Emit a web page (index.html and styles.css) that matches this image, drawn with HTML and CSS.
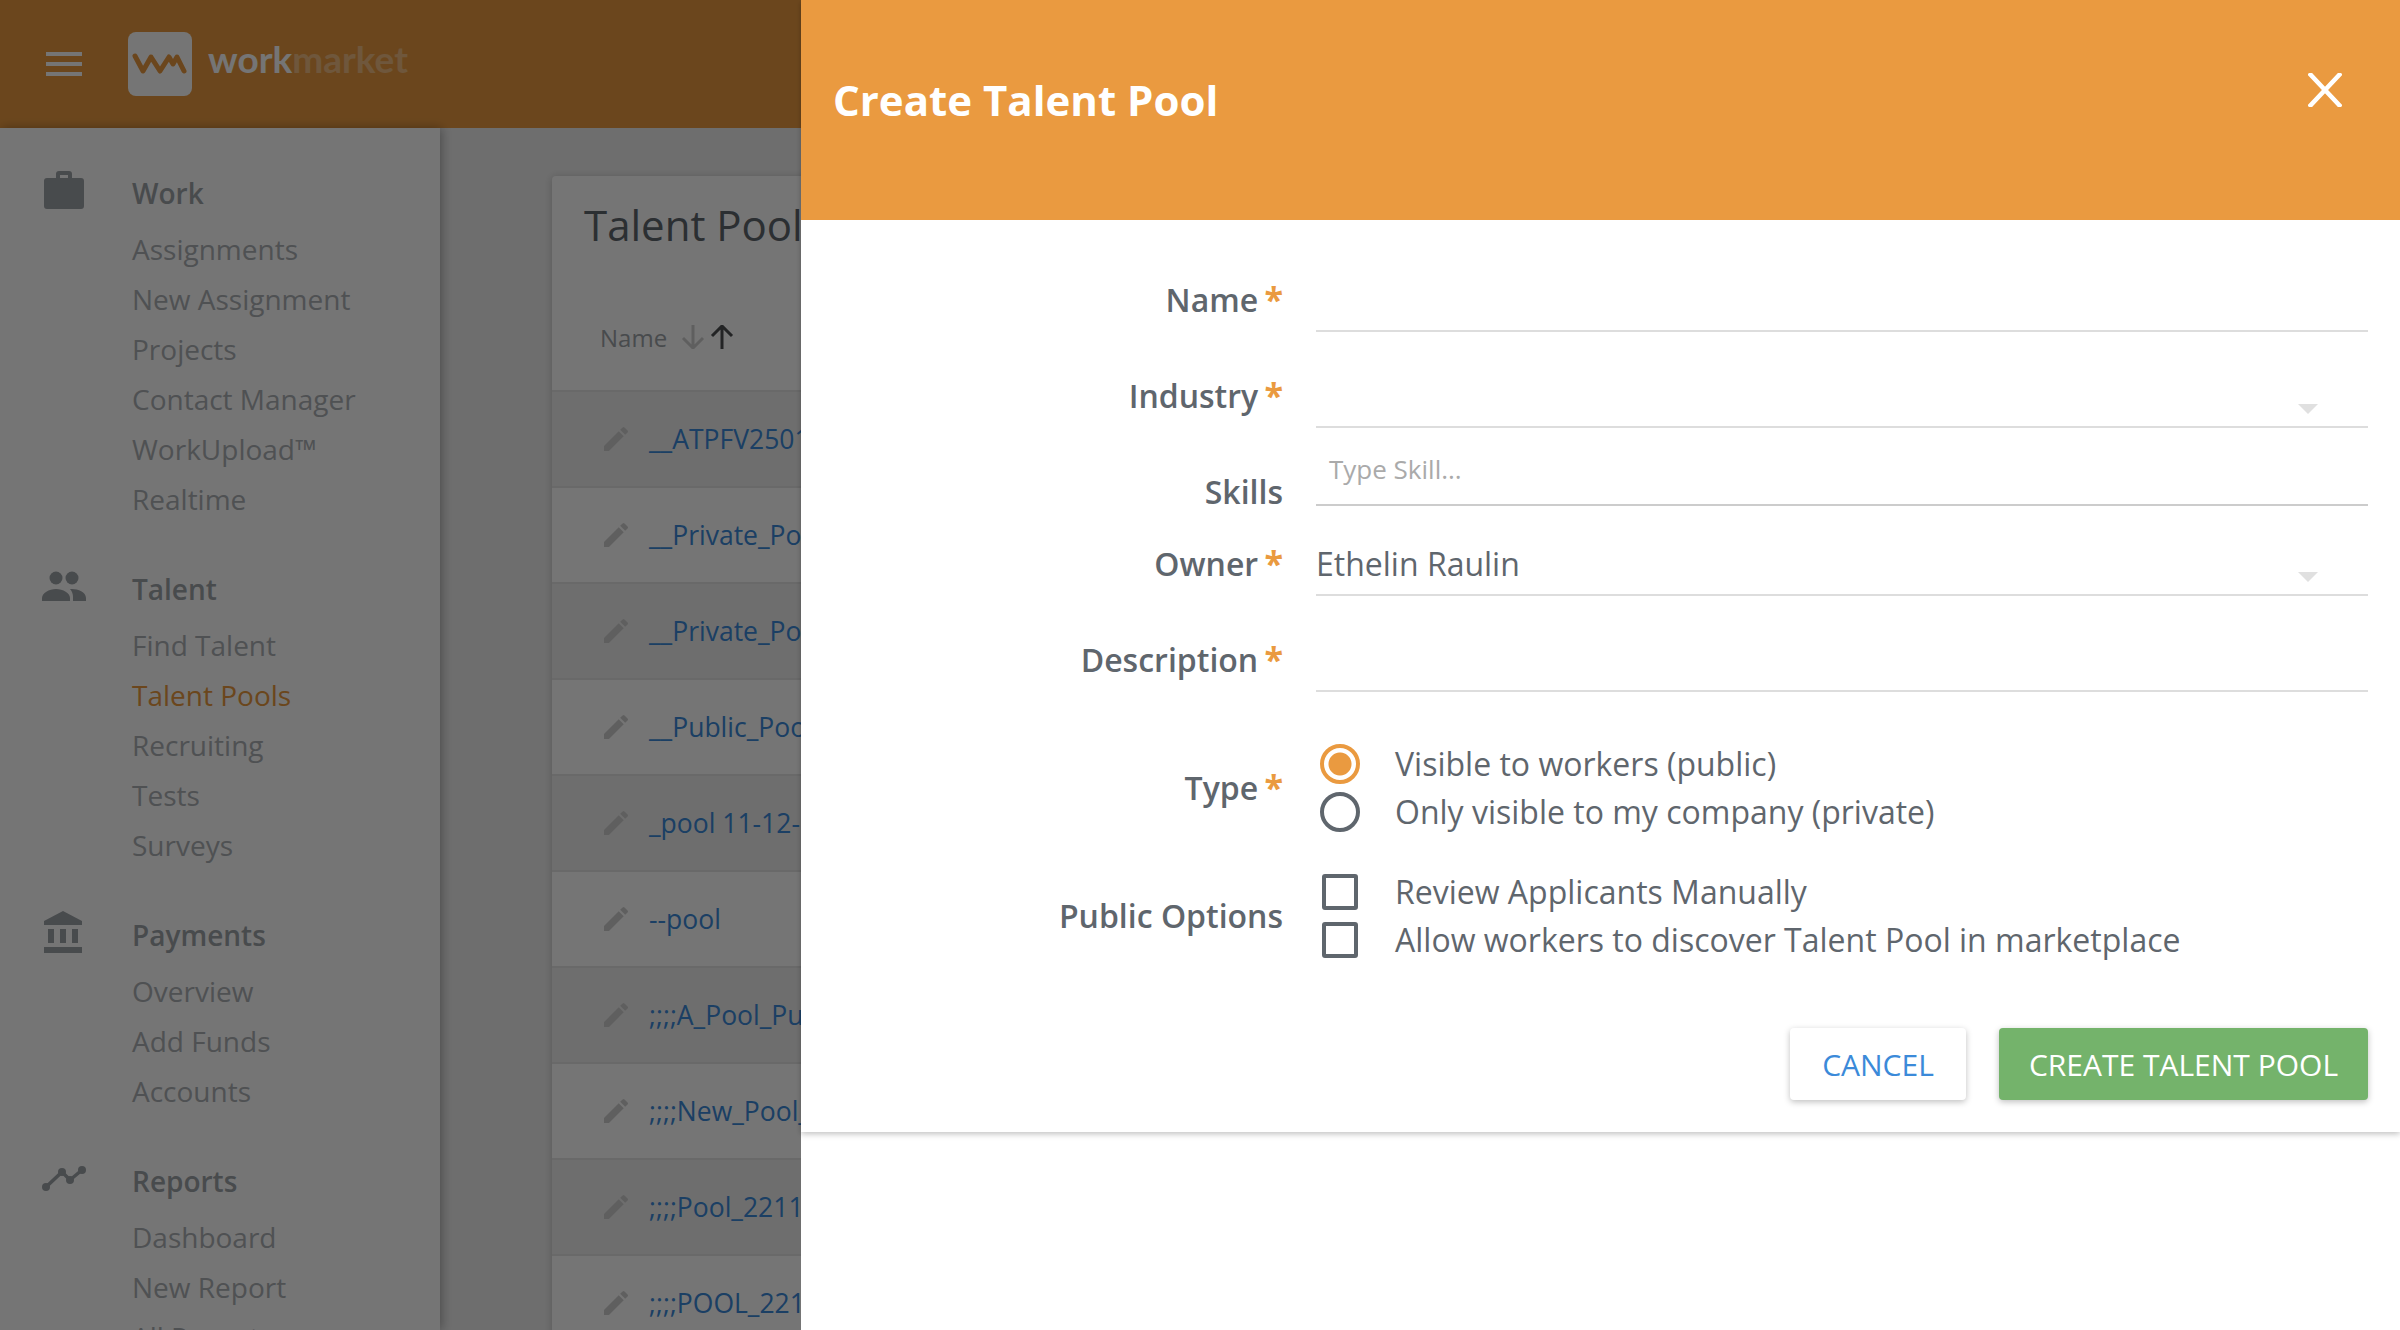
FILE: index.html
```html
<!DOCTYPE html>
<html lang="en">
<head>
    <meta charset="UTF-8">
    <meta name="viewport" content="width=device-width, initial-scale=1.0">
    <title>Create Talent Pool</title>
    <link rel="stylesheet" href="styles.css">
</head>
<body>
    <header class="topbar">
        <div class="hamburger"><span></span><span></span><span></span></div>
        <div class="logo-mark">
            <svg width="64" height="64" viewBox="0 0 64 64"><polyline points="7,24 15,39 23,25 32,39 41,25 45,32 49,25 56,39" fill="none" stroke="#ea9a40" stroke-width="5" stroke-linejoin="round" stroke-linecap="round"/></svg>
        </div>
        <div class="logo-text">work<span>market</span></div>
    </header>

    <div class="app">
        <nav class="sidebar">
            <section class="nav-section">
                <h3 class="nav-heading">
                    <svg class="nav-icon" viewBox="0 0 44 48"><path fill-rule="evenodd" d="M14 11V7a3 3 0 0 1 3-3h10a3 3 0 0 1 3 3v4h9a3 3 0 0 1 3 3v25a3 3 0 0 1-3 3H5a3 3 0 0 1-3-3V14a3 3 0 0 1 3-3zM18 11h8V8h-8z"/></svg>
                    Work
                </h3>
                <a class="nav-item">Assignments</a>
                <a class="nav-item">New Assignment</a>
                <a class="nav-item">Projects</a>
                <a class="nav-item">Contact Manager</a>
                <a class="nav-item">WorkUpload™</a>
                <a class="nav-item">Realtime</a>
            </section>
            <section class="nav-section">
                <h3 class="nav-heading">
                    <svg class="nav-icon" viewBox="0 0 44 48"><circle cx="14" cy="15" r="6.5"/><circle cx="30" cy="15" r="6.5"/><path d="M0 38v-3c0-5 7-9 14-9s14 4 14 9v3z"/><path d="M30 26c6 0 14 3 14 9v3H31v-4c0-3-1-6-3-8z"/></svg>
                    Talent
                </h3>
                <a class="nav-item">Find Talent</a>
                <a class="nav-item active">Talent Pools</a>
                <a class="nav-item">Recruiting</a>
                <a class="nav-item">Tests</a>
                <a class="nav-item">Surveys</a>
            </section>
            <section class="nav-section">
                <h3 class="nav-heading">
                    <svg class="nav-icon" viewBox="0 0 44 48"><path d="M2 12 21 2l19 10v4H2z"/><rect x="6" y="20" width="6" height="14"/><rect x="18" y="20" width="6" height="14"/><rect x="30" y="20" width="6" height="14"/><rect x="2" y="38" width="38" height="6"/></svg>
                    Payments
                </h3>
                <a class="nav-item">Overview</a>
                <a class="nav-item">Add Funds</a>
                <a class="nav-item">Accounts</a>
            </section>
            <section class="nav-section">
                <h3 class="nav-heading">
                    <svg class="nav-icon" viewBox="0 0 44 48"><polyline points="4,32 20,17 28,25 40,15" fill="none" stroke="#9ea3a8" stroke-width="3.5"/><circle cx="4" cy="32" r="4"/><circle cx="20" cy="17" r="4"/><circle cx="28" cy="25" r="4"/><circle cx="40" cy="15" r="4"/></svg>
                    Reports
                </h3>
                <a class="nav-item">Dashboard</a>
                <a class="nav-item">New Report</a>
                <a class="nav-item">All Reports</a>
            </section>
        </nav>

        <main class="content">
            <div class="card">
                <h1 class="card-title">Talent Pools</h1>
                <div class="table-head">
                    <span>Name</span>
                    <svg class="sort-arrow" viewBox="0 0 24 24"><path d="M12 0v22M2 13l10 10 10-10" fill="none" stroke="#d0d0d0" stroke-width="3"/></svg>
                    <svg class="sort-arrow" viewBox="0 0 24 24"><path d="M12 24V2M2 11 12 1l10 10" fill="none" stroke="#4c4f52" stroke-width="3"/></svg>
                </div>
                <div class="pool-row"><svg class="pencil" viewBox="0 0 24 24"><path d="M3 17.25V21h3.75L17.81 9.94l-3.75-3.75zM20.71 7.04a1 1 0 0 0 0-1.41l-2.34-2.34a1 1 0 0 0-1.41 0l-1.83 1.83 3.75 3.75z"/></svg><a>__ATPFV2501</a></div>
                <div class="pool-row"><svg class="pencil" viewBox="0 0 24 24"><path d="M3 17.25V21h3.75L17.81 9.94l-3.75-3.75zM20.71 7.04a1 1 0 0 0 0-1.41l-2.34-2.34a1 1 0 0 0-1.41 0l-1.83 1.83 3.75 3.75z"/></svg><a>__Private_Pool</a></div>
                <div class="pool-row"><svg class="pencil" viewBox="0 0 24 24"><path d="M3 17.25V21h3.75L17.81 9.94l-3.75-3.75zM20.71 7.04a1 1 0 0 0 0-1.41l-2.34-2.34a1 1 0 0 0-1.41 0l-1.83 1.83 3.75 3.75z"/></svg><a>__Private_Pool</a></div>
                <div class="pool-row"><svg class="pencil" viewBox="0 0 24 24"><path d="M3 17.25V21h3.75L17.81 9.94l-3.75-3.75zM20.71 7.04a1 1 0 0 0 0-1.41l-2.34-2.34a1 1 0 0 0-1.41 0l-1.83 1.83 3.75 3.75z"/></svg><a>__Public_Pool</a></div>
                <div class="pool-row"><svg class="pencil" viewBox="0 0 24 24"><path d="M3 17.25V21h3.75L17.81 9.94l-3.75-3.75zM20.71 7.04a1 1 0 0 0 0-1.41l-2.34-2.34a1 1 0 0 0-1.41 0l-1.83 1.83 3.75 3.75z"/></svg><a>_pool 11-12-17</a></div>
                <div class="pool-row"><svg class="pencil" viewBox="0 0 24 24"><path d="M3 17.25V21h3.75L17.81 9.94l-3.75-3.75zM20.71 7.04a1 1 0 0 0 0-1.41l-2.34-2.34a1 1 0 0 0-1.41 0l-1.83 1.83 3.75 3.75z"/></svg><a>--pool</a></div>
                <div class="pool-row"><svg class="pencil" viewBox="0 0 24 24"><path d="M3 17.25V21h3.75L17.81 9.94l-3.75-3.75zM20.71 7.04a1 1 0 0 0 0-1.41l-2.34-2.34a1 1 0 0 0-1.41 0l-1.83 1.83 3.75 3.75z"/></svg><a>;;;;A_Pool_Public</a></div>
                <div class="pool-row"><svg class="pencil" viewBox="0 0 24 24"><path d="M3 17.25V21h3.75L17.81 9.94l-3.75-3.75zM20.71 7.04a1 1 0 0 0 0-1.41l-2.34-2.34a1 1 0 0 0-1.41 0l-1.83 1.83 3.75 3.75z"/></svg><a>;;;;New_Pool_1</a></div>
                <div class="pool-row"><svg class="pencil" viewBox="0 0 24 24"><path d="M3 17.25V21h3.75L17.81 9.94l-3.75-3.75zM20.71 7.04a1 1 0 0 0 0-1.41l-2.34-2.34a1 1 0 0 0-1.41 0l-1.83 1.83 3.75 3.75z"/></svg><a>;;;;Pool_2211</a></div>
                <div class="pool-row"><svg class="pencil" viewBox="0 0 24 24"><path d="M3 17.25V21h3.75L17.81 9.94l-3.75-3.75zM20.71 7.04a1 1 0 0 0 0-1.41l-2.34-2.34a1 1 0 0 0-1.41 0l-1.83 1.83 3.75 3.75z"/></svg><a>;;;;POOL_2211</a></div>
            </div>
        </main>
    </div>

    <div class="scrim"></div>

    <aside class="drawer">
        <div class="sheet">
            <div class="sheet-header">
                <h2 class="sheet-title">Create Talent Pool</h2>
                <svg class="close-icon" viewBox="0 0 34 34"><path d="M1 0 33 34M33 0 1 34" fill="none" stroke="#fff" stroke-width="4.5"/></svg>
            </div>
            <form class="sheet-form">
                <div class="form-row row-name">
                    <label class="form-label">Name <b>*</b></label>
                    <div class="field"></div>
                </div>
                <div class="form-row row-industry">
                    <label class="form-label">Industry <b>*</b></label>
                    <div class="field"><i class="caret"></i></div>
                </div>
                <div class="form-row row-skills">
                    <label class="form-label">Skills</label>
                    <div class="field field-skills"><span class="placeholder">Type Skill...</span></div>
                </div>
                <div class="form-row row-owner">
                    <label class="form-label">Owner <b>*</b></label>
                    <div class="field"><span class="value">Ethelin Raulin</span><i class="caret"></i></div>
                </div>
                <div class="form-row row-description">
                    <label class="form-label">Description <b>*</b></label>
                    <div class="field"></div>
                </div>
                <div class="form-row choice-row row-type">
                    <label class="form-label">Type <b>*</b></label>
                    <div class="choices">
                        <div class="choice"><span class="control"><i class="radio checked"></i></span>Visible to workers (public)</div>
                        <div class="choice"><span class="control"><i class="radio"></i></span>Only visible to my company (private)</div>
                    </div>
                </div>
                <div class="form-row choice-row row-options">
                    <label class="form-label">Public Options</label>
                    <div class="choices">
                        <div class="choice"><span class="control"><i class="checkbox"></i></span>Review Applicants Manually</div>
                        <div class="choice"><span class="control"><i class="checkbox"></i></span>Allow workers to discover Talent Pool in marketplace</div>
                    </div>
                </div>
                <div class="form-actions">
                    <button type="button" class="btn btn-cancel">CANCEL</button>
                    <button type="button" class="btn btn-create">CREATE TALENT POOL</button>
                </div>
            </form>
        </div>
    </aside>
</body>
</html>
```

FILE: styles.css
```css
* {
    box-sizing: border-box;
}
html, body {
    height: 100%;
}
body {
    margin: 0;
    height: 1330px;
    overflow: hidden;
    font-family: "Open Sans", "Liberation Sans", sans-serif;
    background-color: #f0f0f0;
    color: #5f666d;
}
.topbar {
    height: 128px;
    background-color: #ea9a40;
    display: flex;
    align-items: center;
    padding-left: 46px;
}
.hamburger {
    width: 36px;
    display: flex;
    flex-direction: column;
    gap: 6px;
    margin-right: 46px;
}
.hamburger span {
    height: 4px;
    background-color: #fff;
}
.logo-mark {
    width: 64px;
    height: 64px;
    border-radius: 8px;
    background-color: #fff;
    margin-right: 16px;
}
.logo-mark svg {
    display: block;
}
.logo-text {
    font-family: Lato, "Open Sans", sans-serif;
    font-size: 37px;
    font-weight: 700;
    color: #fff;
    margin-top: -11px;
}
.logo-text span {
    opacity: 0.35;
}
.app {
    display: flex;
    height: 1202px;
}
.sidebar {
    width: 440px;
    flex-shrink: 0;
    padding: 40px 0 0 42px;
    background-color: #fff;
    box-shadow: 2px 0 10px rgba(0, 0, 0, 0.3);
    position: relative;
}
.nav-section {
    margin-bottom: 40px;
}
.nav-heading {
    display: flex;
    align-items: center;
    height: 50px;
    margin: 0 0 6px;
    font-size: 28px;
    font-weight: 600;
    color: #9ea3a8;
}
.nav-icon {
    width: 44px;
    height: 48px;
    margin-right: 46px;
    margin-top: -4px;
    fill: #9ea3a8;
}
.nav-item {
    display: block;
    height: 50px;
    line-height: 50px;
    margin-left: 90px;
    font-size: 28px;
    color: #adb1b5;
}
.nav-item.active {
    color: #ea9a40;
}
.content {
    flex: 1;
    padding: 48px 0 0 112px;
}
.card {
    background-color: #fff;
    border-radius: 4px;
    box-shadow: 0 1px 8px rgba(0, 0, 0, 0.2);
}
.card-title {
    margin: 0;
    height: 120px;
    padding: 20px 0 0 32px;
    font-size: 42px;
    line-height: 58px;
    font-weight: 400;
    color: #5f666d;
}
.table-head {
    height: 96px;
    display: flex;
    align-items: center;
    padding: 0 0 12px 48px;
    font-size: 24px;
    color: #9ea3a8;
    border-bottom: 2px solid #e4e4e4;
}
.table-head span {
    margin-right: 14px;
}
.sort-arrow {
    width: 24px;
    height: 24px;
    margin-right: 5px;
}
.pool-row {
    height: 96px;
    display: flex;
    align-items: center;
    padding-left: 48px;
    font-size: 26.5px;
    border-bottom: 2px solid #e4e4e4;
}
.pool-row:nth-of-type(even) {
    background-color: #f0f0f0;
}
.pool-row:nth-of-type(odd) {
    background-color: #fff;
}
.pool-row a {
    color: #3b8ad9;
    white-space: nowrap;
}
.pencil {
    width: 32px;
    height: 32px;
    margin-right: 17px;
    fill: #d0d0d0;
}
.scrim {
    position: fixed;
    top: 0;
    left: 0;
    right: 0;
    bottom: 0;
    background-color: rgba(0, 0, 0, 0.54);
}
.drawer {
    position: fixed;
    top: 0;
    left: 801px;
    right: 0;
    bottom: 0;
    background-color: #fff;
}
.sheet {
    box-shadow: 0 2px 6px rgba(0, 0, 0, 0.25);
}
.sheet-header {
    height: 220px;
    background-color: #ea9a40;
    padding: 0 58px 0 32px;
    display: flex;
    justify-content: space-between;
    align-items: flex-start;
}
.sheet-title {
    margin: 70px 0 0;
    font-size: 42px;
    line-height: 60px;
    font-weight: 700;
    color: #fff;
}
.close-icon {
    width: 34px;
    height: 34px;
    margin-top: 73px;
}
.sheet-form {
    padding: 16px 32px 32px 0;
}
.form-row {
    display: grid;
    grid-template-columns: 482px 1fr;
    column-gap: 33px;
    align-items: end;
}
.form-label {
    text-align: right;
    font-size: 32px;
    line-height: 44px;
    font-weight: 600;
    margin-bottom: 10px;
}
.form-label b {
    color: #ea9a40;
    font-weight: 700;
    font-size: 34px;
    line-height: 0;
    margin-left: -2px;
}
.field {
    display: flex;
    align-items: flex-end;
    justify-content: space-between;
    border-bottom: 2px solid #ddd;
    height: 100%;
}
.row-name {
    height: 96px;
}
.row-industry {
    height: 96px;
}
.row-skills {
    height: 86px;
}
.row-skills .form-label {
    margin-bottom: 0;
}
.field-skills {
    height: 78px;
    align-self: start;
    border-bottom-color: #ccc;
    align-items: center;
    padding: 6px 0 0 13px;
}
.row-owner {
    height: 82px;
}
.row-description {
    height: 96px;
}
.placeholder {
    font-size: 26px;
    color: #aaa;
}
.value {
    font-size: 32px;
    line-height: 44px;
    margin-bottom: 8px;
}
.caret {
    margin: 0 50px 12px auto;
    border-top: 10px solid #e0e0e0;
    border-left: 10px solid transparent;
    border-right: 10px solid transparent;
}
.choice-row {
    align-items: center;
}
.choice-row .form-label {
    margin-bottom: 0;
}
.row-type {
    margin-top: 48px;
}
.row-options {
    margin-top: 32px;
}
.choice {
    display: flex;
    align-items: center;
    height: 48px;
    padding-bottom: 2px;
    font-size: 32px;
}
.control {
    width: 48px;
    display: flex;
    justify-content: center;
    margin: 2px 31px 0 0;
}
.radio {
    width: 40px;
    height: 40px;
    border-radius: 50%;
    border: 4px solid #5f666d;
}
.radio.checked {
    border-color: #ea9a40;
    background: radial-gradient(circle, #ea9a40 0 11px, #fff 12px);
}
.checkbox {
    width: 36px;
    height: 36px;
    border: 4px solid #5f666d;
    border-radius: 3px;
}
.form-actions {
    display: flex;
    justify-content: flex-end;
    gap: 33px;
    margin-top: 64px;
}
.btn {
    height: 72px;
    border: none;
    border-radius: 4px;
    font-family: inherit;
    font-size: 30px;
    box-shadow: 0 2px 6px rgba(0, 0, 0, 0.25);
    cursor: pointer;
}
.btn-cancel {
    width: 176px;
    background-color: #fff;
    color: #3b8ad9;
}
.btn-create {
    width: 369px;
    background-color: #74b36b;
    color: #fff;
}
```
